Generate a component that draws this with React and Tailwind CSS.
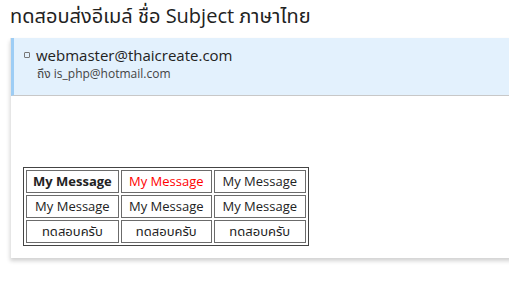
export default function App() {
  const cell = "border border-[#6b6b6b] px-[6px] h-[23px] text-center whitespace-nowrap"
  return (
    <div className="w-[509px] h-[283px] bg-white overflow-hidden font-['Open_Sans','Noto_Sans','Noto_Sans_Thai',sans-serif] text-[#333]">
      <h1 className="pl-[10px] pt-[3px] text-[20px] leading-[26px] text-[#222]">ทดสอบส่งอีเมล์ ชื่อ Subject ภาษาไทย</h1>

      <div className="ml-[10px] mt-[9px] w-[520px] bg-white border-l border-[#e6e6e6] shadow-[0_3px_4px_rgba(0,0,0,0.18)]">
        {/* Header */}
        <div className="h-[58px] bg-[#e3f1fd] border-l-[3px] border-[#9dcdf5] border-b border-b-[#c8c8c8] pl-[10px] pt-[7px]">
          <div className="flex items-center gap-[6px]">
            <span className="w-[6px] h-[6px] border border-[#777] rounded-[1px]" />
            <span className="text-[15px] leading-[20px] text-[#222]">webmaster@thaicreate.com</span>
          </div>
          <div className="pl-[13px] mt-[1px] text-[12px] leading-[16px] text-[#444]">ถึง is_php@hotmail.com</div>
        </div>

        {/* Body */}
        <div className="h-[162px] pl-[12px] pt-[71px]">
          <table className="border border-[#444] border-separate border-spacing-[2px] text-[13px] leading-[17px] text-[#222]">
            <tbody>
              <tr>
                <td className={`${cell} w-[92px] font-bold`}>My Message</td>
                <td className={`${cell} w-[91px] text-[#ff0000]`}>My Message</td>
                <td className={`${cell} w-[92px]`}>My Message</td>
              </tr>
              <tr>
                <td className={cell}>My Message</td>
                <td className={cell}>My Message</td>
                <td className={cell}>My Message</td>
              </tr>
              <tr>
                <td className={`${cell} text-[13px]`}>ทดสอบครับ</td>
                <td className={`${cell} text-[13px]`}>ทดสอบครับ</td>
                <td className={`${cell} text-[13px]`}>ทดสอบครับ</td>
              </tr>
            </tbody>
          </table>
        </div>
      </div>
    </div>
  )
}
